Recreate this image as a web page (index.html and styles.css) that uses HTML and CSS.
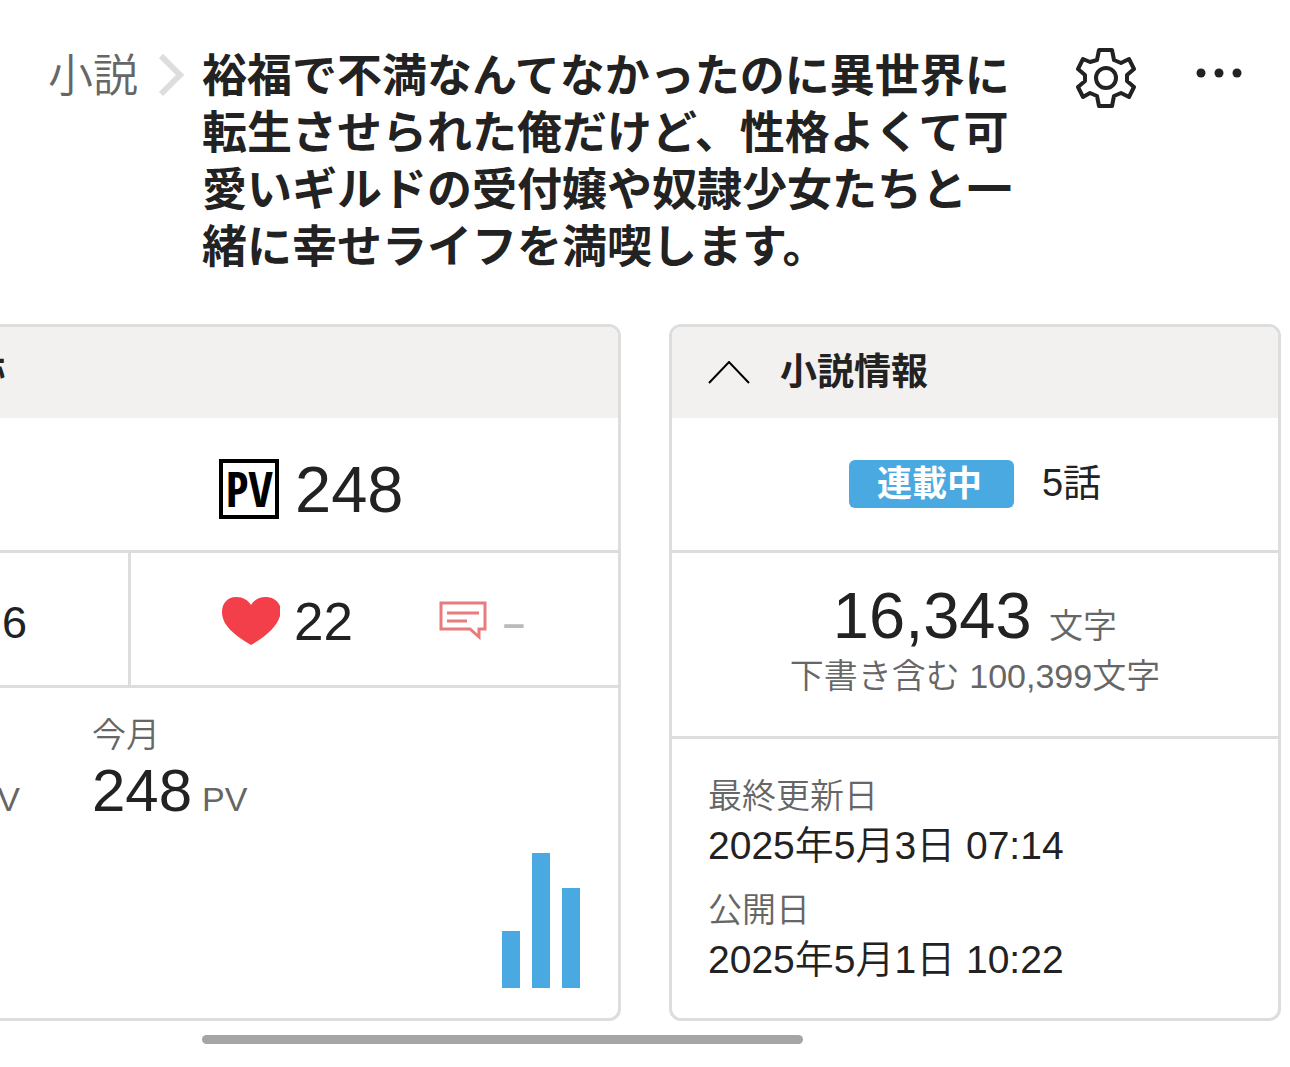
FILE: index.html
```html
<!DOCTYPE html>
<html lang="ja">
<head>
    <meta charset="UTF-8">
    <meta name="viewport" content="width=device-width, initial-scale=1.0">
    <title>小説</title>
    <link rel="stylesheet" href="styles.css">
</head>
<body>

<header class="header">
    <a href="#" class="crumb">小説</a>
    <svg class="crumb-arrow" viewBox="0 0 26 44" aria-hidden="true"><path d="M3 2l19 19L3 40"/></svg>
    <h1 class="title">裕福で不満なんてなかったのに異世界に転生させられた俺だけど、性格よくて可愛いギルドの受付嬢や奴隷少女たちと一緒に幸せライフを満喫します。</h1>
    <button type="button" class="icon-btn" aria-label="設定">
        <svg class="gear" viewBox="0 0 60 60">
            <path d="M23 2H36L38 12L45 15L53 11L58 21L51 27V33L58 39L53 49L45 45L38 48L36 58H23L21 48L14 45L7 49L2 39L9 33V27L2 21L7 11L14 14L21 12Z"/>
            <circle cx="30" cy="30" r="10"/>
        </svg>
    </button>
    <button type="button" class="icon-btn" aria-label="メニュー">
        <svg class="dots" viewBox="0 0 48 50"><circle cx="5" cy="25" r="4.500"/><circle cx="23" cy="25" r="4.500"/><circle cx="41" cy="25" r="4.500"/></svg>
    </button>
</header>

<main>
    <div class="cards">
        <section class="card card-access">
            <h2 class="card-head"><span class="head-text">足跡</span></h2>
            <div class="row halves">
                <div class="cell cell-right">
                    <span class="pv-icon">PV</span>
                    <span class="num">248</span>
                </div>
            </div>
            <div class="row halves">
                <div class="cell cell-left"><span class="num-s">6</span></div>
                <div class="cell cell-right">
                    <svg class="heart" viewBox="0 0 58 48" aria-hidden="true"><path d="M29 48C12 38 0 28 0 15C0 6 6 0 14 0C21 0 26 3 29 8C32 3 37 0 44 0C51 0 56 4 58 9V19C55 29 45 39 29 48Z"/></svg>
                    <span class="num-m">22</span>
                    <svg class="comment" viewBox="0 0 48 40" aria-hidden="true"><path d="M2 2H46V28H40V36L31 28H2ZM8 12H40M8 20H28"/></svg>
                    <span class="none">–</span>
                </div>
            </div>
            <div class="stats">
                <div class="stat stat-prev">
                    <p class="value"><span class="unit">PV</span></p>
                </div>
                <div class="stat">
                    <p class="label">今月</p>
                    <p class="value">248<span class="unit">PV</span></p>
                </div>
            </div>
            <div class="chart">
                <span class="bar" style="height:57px"></span>
                <span class="bar" style="height:135px"></span>
                <span class="bar" style="height:100px"></span>
            </div>
        </section>

        <section class="card card-info">
            <h2 class="card-head">
                <button type="button" class="toggle">
                    <svg class="caret" viewBox="0 0 42 24" aria-hidden="true"><path d="M1 22L21 1L41 22"/></svg>
                    小説情報
                </button>
            </h2>
            <div class="row center">
                <span class="badge">連載中</span>
                <span class="episodes">5話</span>
            </div>
            <div class="row chars">
                <p class="chars-total"><span class="num">16,343</span> 文字</p>
                <p class="chars-draft">下書き含む 100,399文字</p>
            </div>
            <dl class="dates">
                <dt>最終更新日</dt>
                <dd>2025年5月3日 07:14</dd>
                <dt>公開日</dt>
                <dd>2025年5月1日 10:22</dd>
            </dl>
        </section>
    </div>
    <div class="scrollbar"></div>
</main>

</body>
</html>
```
FILE: styles.css
```css
* {
    margin: 0;
    padding: 0;
    box-sizing: border-box;
}
body {
    font-family: "Liberation Sans", "Noto Sans CJK JP", sans-serif;
    color: #222;
    background: #fff;
    overflow-x: hidden;
}
a {
    text-decoration: none;
}
button {
    font: inherit;
    color: inherit;
    border: 0;
    background: none;
    cursor: pointer;
}
svg {
    display: block;
    flex-shrink: 0;
    fill: none;
}

/* header */
.header {
    display: flex;
    align-items: flex-start;
    padding: 48px 46px 48px 48px;
}
.crumb {
    flex-shrink: 0;
    font-size: 45px;
    font-weight: 350;
    line-height: 58px;
    color: #666;
}
.crumb-arrow {
    width: 26px;
    height: 44px;
    margin: 6px 18px 0 20px;
    stroke: #ddd;
    stroke-width: 6;
}
.title {
    flex: 1;
    font-size: 45px;
    line-height: 57px;
}
.icon-btn {
    margin-left: 44px;
}
.icon-btn + .icon-btn {
    margin-left: 60px;
}
.gear {
    width: 60px;
    height: 60px;
    stroke: #222;
    stroke-width: 4;
    stroke-linejoin: round;
}
.dots {
    width: 48px;
    height: 50px;
    fill: #222;
}

/* cards */
.cards {
    display: flex;
    justify-content: flex-end;
    gap: 48px;
    padding-right: 9px;
    overflow: hidden;
}
.card {
    flex-shrink: 0;
    border: 3px solid #ddd;
    border-radius: 12px;
    overflow: hidden;
}
.card-access {
    display: flex;
    flex-direction: column;
    width: 980px;
}
.card-info {
    width: 612px;
}
.card-head {
    height: 91px;
    padding: 0 36px;
    background: #f2f1ef;
    font-size: 37px;
    line-height: 91px;
}
.head-text {
    display: block;
    width: 325px;
    text-align: right;
}
.toggle {
    display: flex;
    align-items: center;
    gap: 30px;
    font-weight: bold;
}
.caret {
    width: 42px;
    height: 24px;
    stroke: #000;
    stroke-width: 2;
}
.row {
    min-height: 135px;
    border-bottom: 3px solid #ddd;
}
.halves {
    display: grid;
    grid-template-columns: 1fr 1fr;
}
.center {
    display: flex;
    align-items: center;
    justify-content: center;
    gap: 28px;
}
.cell {
    display: flex;
    align-items: center;
}
.cell-left {
    justify-content: flex-end;
    padding-right: 101px;
    border-right: 3px solid #ddd;
}
.cell-right {
    grid-column: 2;
    padding: 10px 0 0 88px;
}
.cell-left + .cell-right {
    padding-top: 4px;
}
.num {
    font-size: 65px;
}
.num-m {
    font-size: 53px;
}
.num-s {
    padding-top: 8px;
    font-size: 45px;
}
.pv-icon {
    width: 60px;
    margin-right: 16px;
    border: 4px solid #000;
    font: bold 48px/52px "Liberation Sans Narrow", "Open Sans Condensed", "Roboto Condensed", "DejaVu Sans Condensed", sans-serif;
    color: #000;
    text-align: center;
}
.heart {
    width: 58px;
    height: 48px;
    margin: 0 14px 0 3px;
    fill: #f23f49;
}
.comment {
    width: 48px;
    height: 40px;
    margin: 0 16px 0 86px;
    stroke: #e87c7c;
    stroke-width: 3;
}
.none {
    padding-top: 6px;
    font-size: 39px;
    font-weight: bold;
    color: #bbb;
}
.label,
.unit {
    font-size: 34px;
    font-weight: 350;
    color: #666;
}
.stats {
    display: grid;
    grid-template-columns: 448px 1fr;
    align-items: end;
    padding-top: 22px;
}
.stat-prev {
    padding-right: 72px;
    text-align: right;
}
.label {
    line-height: 50px;
}
.value {
    font-size: 60px;
    line-height: 62px;
}
.value .unit {
    margin-left: 10px;
}
.chart {
    display: flex;
    align-items: flex-end;
    justify-content: flex-end;
    gap: 12px;
    margin-top: auto;
    padding: 0 38px 30px;
}
.bar {
    width: 18px;
    background: #4aa9e0;
}

/* novel info */
.badge {
    padding: 0 32px 0 28px;
    border-radius: 6px;
    background: #4aa9e0;
    color: #fff;
    font-size: 35px;
    font-weight: bold;
    line-height: 48px;
}
.episodes {
    padding-bottom: 10px;
    font-size: 38px;
}
.chars {
    padding: 33px 0 39px;
    font-size: 34px;
    text-align: center;
    color: #666;
    font-weight: 350;
}
.chars-total {
    line-height: 60px;
}
.chars-total .num {
    margin-right: 8px;
    color: #222;
}
.chars-draft {
    line-height: 41px;
}
.dates {
    padding: 32px 36px 33px;
    line-height: 50px;
}
.dates dt {
    font-size: 34px;
    font-weight: 350;
    color: #666;
}
.dates dd {
    font-size: 39px;
    font-weight: 350;
}
.dates dd + dt {
    margin-top: 14px;
}

.scrollbar {
    width: calc(50% - 44px);
    height: 9px;
    margin: 14px 0 0 202px;
    border-radius: 5px;
    background: #a5a5a5;
}
```
